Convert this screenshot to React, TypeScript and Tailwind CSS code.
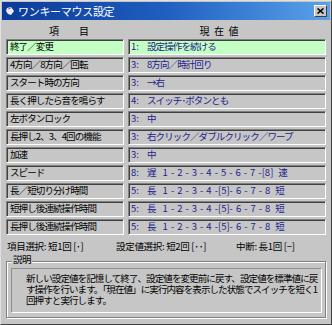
import React from "react";

type Val = { n: string; t: string; scale?: string[]; end?: string };

const speed = ["1", "-", "2", "-", "3", "-", "4", "-", "5", "-", "6", "-", "7", "-[8]"];
const len = ["1", "-", "2", "-", "3", "-", "4", "-[5]-", "6", "-", "7", "-", "8"];

const rows: [string, Val][] = [
  ["終了／変更", { n: "1:", t: "設定操作を続ける" }],
  ["4方向／8方向／回転", { n: "3:", t: "8方向／時計回り" }],
  ["スタート時の方向", { n: "3:", t: "→右" }],
  ["長く押したら音を鳴らす", { n: "4:", t: "スイッチ･ボタンとも" }],
  ["左ボタンロック", { n: "3:", t: "中" }],
  ["長押し2、3、4回の機能", { n: "3:", t: "右クリック／ダブルクリック／ワープ" }],
  ["加速", { n: "3:", t: "中" }],
  ["スピード", { n: "8:", t: "遅", scale: speed, end: "速" }],
  ["長／短切り分け時間", { n: "5:", t: "長", scale: len, end: "短" }],
  ["短押し後連続操作時間", { n: "5:", t: "長", scale: len, end: "短" }],
  ["長押し後連続操作時間", { n: "5:", t: "長", scale: len, end: "短" }],
];

const font = { fontFamily: '"Noto Sans CJK JP", "Noto Sans", sans-serif' };

function Cell({ children, green, right }: { children: React.ReactNode; green?: boolean; right?: boolean }) {
  return (
    <div
      className={
        "h-[16px] flex items-center border border-t-[#808080] border-l-[#808080] border-b-white border-r-white shadow-[inset_1px_1px_0_#404040] pl-[2px] whitespace-pre text-[9.5px] tracking-[-0.9px] leading-none overflow-hidden " +
        (green ? "bg-[#c4ffc4] " : "bg-[#c6c6c6] ") +
        (right ? "text-[#22228c]" : "text-black")
      }
    >
      {children}
    </div>
  );
}

export default function App() {
  return (
    <div
      className="w-[332px] h-[325px] bg-[#c6c6c6] border border-t-[#e0e0e0] border-l-[#e0e0e0] border-b-[#404040] border-r-[#404040] flex flex-col overflow-hidden"
      style={font}
    >
      <div className="mx-[1px] mt-[1px] h-[18px] flex items-center bg-gradient-to-r from-[#0c3a98] via-[#1f5fc0] to-[#5aa2ea] px-[3px]">
        <svg width="10" height="10" viewBox="0 0 10 10" className="mr-[3px]">
          <path d="M2 2 L6 1 L9 5 L6 9 L3 8 L1 5 Z" fill="#f0f0f0" />
          <path d="M3 3 L6 2" stroke="#808080" strokeWidth="1" />
        </svg>
        <span className="text-white text-[11px] tracking-[-0.3px] leading-none">ワンキーマウス設定</span>
        <div className="ml-auto w-[13px] h-[12px] bg-[#c6c6c6] border border-t-white border-l-white border-b-[#404040] border-r-[#404040] flex items-center justify-center">
          <svg width="7" height="6" viewBox="0 0 7 6">
            <path d="M0.5 0.5 L6.5 5.5 M6.5 0.5 L0.5 5.5" stroke="#000" strokeWidth="1.6" />
          </svg>
        </div>
      </div>

      <div className="flex flex-col px-[5px] pt-[3px]">
        <div className="flex h-[15px] items-center text-[10px] text-black">
          <div className="w-[118px] text-center whitespace-pre pl-[8px]">項{"\u3000\u3000"}目</div>
          <div className="flex-1 text-center whitespace-pre ml-[4px] pr-[16px]">現  在  値</div>
        </div>
        <div className="mt-[1px] grid grid-cols-[118px_1fr] gap-x-[4px] gap-y-[2px]">
          {rows.map(([a, b], i) => (
            <React.Fragment key={i}>
              <Cell green={i === 0}>
                <span className="pl-[1px]">{a}</span>
              </Cell>
              <Cell green={i === 0} right>
                <span className="w-[16px] shrink-0 tracking-[0px]">{b.n}</span>
                <span>{b.t}</span>
                {b.scale && (
                  <>
                    <span className="ml-[7px] flex gap-[3px] tracking-[0px]">
                      {b.scale.map((s, k) => (
                        <span key={k}>{s}</span>
                      ))}
                    </span>
                    <span className="ml-[5px]">{b.end}</span>
                  </>
                )}
              </Cell>
            </React.Fragment>
          ))}
        </div>
        <div className="mt-[5px] h-[13px] flex items-center text-[9.5px] tracking-[-0.3px] text-black whitespace-pre pl-[1px]">
          <span className="w-[109px]">項目選択: 短1回 [･]</span>
          <span className="w-[120px]">設定値選択: 短2回 [･･]</span>
          <span>中断: 長1回 [−]</span>
        </div>
        <div className="relative mt-[8px] h-[57px] border border-[#808080] shadow-[1px_1px_0_#ffffff,inset_1px_1px_0_#ffffff]">
          <span className="absolute -top-[7px] left-[5px] bg-[#c6c6c6] px-[1px] text-[9.5px] tracking-[-0.5px] leading-none">説明</span>
          <div className="absolute left-[4px] right-[3px] top-[6px] bottom-[4px] border border-t-[#909090] border-l-[#909090] border-b-white border-r-white px-[14px] pt-[4px] text-[9.5px] tracking-[-0.9px] leading-[11px] text-black">
            <div className="whitespace-nowrap">新しい設定値を記憶して終了、設定値を変更前に戻す、設定値を標準値に戻</div>
            <div className="whitespace-nowrap">す操作を行います。「現在値」に実行内容を表示した状態でスイッチを短く1</div>
            <div className="whitespace-nowrap">回押すと実行します。</div>
          </div>
        </div>
      </div>
    </div>
  );
}
